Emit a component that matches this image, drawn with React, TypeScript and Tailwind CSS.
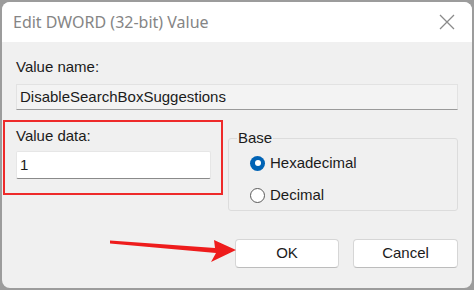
export default function App() {
  return (
    <div className="w-[474px] h-[290px] bg-[#9c9c9c] p-[2px] font-['Liberation_Sans',Arial,sans-serif] text-[#1b1b1b]">
      <div className="relative w-full h-full rounded-[8px] overflow-hidden bg-[#f0f0f0] flex flex-col">
        {/* title bar */}
        <div className="h-[40px] shrink-0 bg-white flex items-center justify-between pl-[11px] pr-[12px]">
          <span className="text-[16px] text-[#858585] font-['Noto_Sans',sans-serif]">Edit DWORD (32-bit) Value</span>
          <svg width="18" height="18" viewBox="0 0 18 18" className="mr-[4px]">
            <path d="M2 2 L16 16 M16 2 L2 16" stroke="#8a8a8a" strokeWidth="1.3" />
          </svg>
        </div>

        <div className="flex-1 flex flex-col px-[14px] pt-[16px]">
          <div className="text-[15px] leading-[18px]">Value name:</div>
          <div className="mt-[8px] h-[26px] bg-[#f3f3f3] border border-[#e2e2e2] border-b-[#9a9a9a] flex items-center pl-[3px] text-[15px]">
            DisableSearchBoxSuggestions
          </div>

          <div className="flex mt-[10px] gap-[17px]">
            {/* value data */}
            <div className="relative w-[195px] shrink-0 pt-[7px]">
              <div className="absolute left-[-13px] top-0 w-[220px] h-[75px] border-2 border-[#ee2a2a]" />
              <div className="text-[15px] leading-[18px]">Value data:</div>
              <div className="mt-[6px] h-[28px] bg-white border border-[#e6e6e6] border-b-[#8a8a8a] rounded-[2px] flex items-center pl-[3px] text-[15px]">
                1
              </div>
            </div>

            {/* base */}
            <fieldset className="flex-1 border border-[#dcdcdc] rounded-[3px] mt-[9px] h-[82px] pl-[21px] pr-[8px] pb-[6px]">
              <legend className="text-[15px] leading-[18px] px-[1px] ml-[-13px]">Base</legend>
              <div className="flex flex-col gap-[14px] mt-[7px]">
                <label className="flex items-center gap-[5px] text-[15px] leading-[18px]">
                  <span className="w-[15px] h-[15px] rounded-full bg-[#0063b5] flex items-center justify-center">
                    <span className="w-[6px] h-[6px] rounded-full bg-white" />
                  </span>
                  Hexadecimal
                </label>
                <label className="flex items-center gap-[5px] text-[15px] leading-[18px]">
                  <span className="w-[15px] h-[15px] rounded-full border border-[#5a5a5a] bg-white" />
                  Decimal
                </label>
              </div>
            </fieldset>
          </div>

          <div className="flex justify-end gap-[14px] mt-[28px]">
            <button className="w-[104px] h-[29px] bg-white border border-[#d6d6d6] border-b-[#bcbcbc] rounded-[4px] text-[15px]">OK</button>
            <button className="w-[105px] h-[29px] bg-white border border-[#d6d6d6] border-b-[#bcbcbc] rounded-[4px] text-[15px]">Cancel</button>
          </div>
        </div>

        {/* annotation arrow */}
        <svg className="absolute left-0 top-0 pointer-events-none" width="470" height="286" viewBox="0 0 470 286">
          <polygon points="108,238.5 108,241.5 214,251 209,260 234,248 212,238 213,246" fill="#ee1c1c" />
        </svg>
      </div>
    </div>
  );
}
